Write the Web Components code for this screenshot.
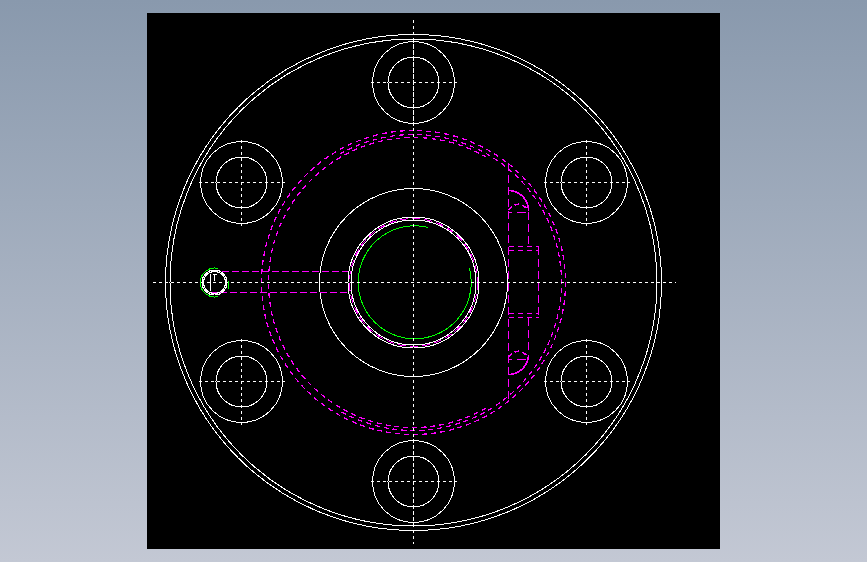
<!DOCTYPE html>
<html>
<head>
<meta charset="utf-8">
<title>Drawing</title>
<style>
  html, body { margin: 0; height: 100%; }
</style>
</head>
<body>
<cad-viewport>
  <cad-drawing></cad-drawing>
</cad-viewport>
<script>
const viewportTemplate = document.createElement('template');
viewportTemplate.innerHTML = `
  <style>
    :host {
      display: flex;
      box-sizing: border-box;
      width: 867px;
      height: 562px;
      padding: 13px 0 0 147px;
      background: linear-gradient(#8999ad, #c3c8d4);
      overflow: hidden;
    }
  </style>
  <slot></slot>
`;

class CadViewport extends HTMLElement {
  constructor() {
    super();
    this.root = this.attachShadow({ mode: 'open' });
    this.root.appendChild(viewportTemplate.content.cloneNode(true));
  }
}

const WHITE = '#fff';
const MAGENTA = '#f0f';
const GREEN = '#0f0';
const CX = 413.5;
const CY = 282.5;
const CENTER_DASH = '3 3';
const HIDDEN_DASH = '8 4';
const RING_DASH = '5 4';
const BOLT_HOLES = [
  [413.5, 82.5], [413.5, 481.5],
  [241.5, 182.5], [241.5, 381.5],
  [586.5, 182.5], [586.5, 381.5],
];

const attrs = (color, dash, width) =>
  `stroke="${color}"${width ? ` stroke-width="${width}"` : ''}${dash ? ` stroke-dasharray="${dash}"` : ''}`;
const circle = (x, y, r, color, dash, width) =>
  `<circle cx="${x}" cy="${y}" r="${r}" ${attrs(color, dash, width)}/>`;
const line = (x1, y1, x2, y2, color, dash, width) =>
  `<line x1="${x1}" y1="${y1}" x2="${x2}" y2="${y2}" ${attrs(color, dash, width)}/>`;
const path = (d, color, dash, width) =>
  `<path d="${d}" ${attrs(color, dash, width)}/>`;

function boltHole([x, y]) {
  return circle(x, y, 41, WHITE) + circle(x, y, 25.5, WHITE)
    + line(x - 43, y, x + 43, y, WHITE, CENTER_DASH)
    + line(x, y - 43, x, y + 43, WHITE, CENTER_DASH);
}

// angles in degrees, clockwise from the top of the circle
function arc(r, from, to, color, dash, width) {
  const at = (deg) => {
    const a = deg * Math.PI / 180;
    return `${CX + r * Math.sin(a)} ${CY - r * Math.cos(a)}`;
  };
  const large = to - from > 180 ? 1 : 0;
  return path(`M${at(from)}A${r} ${r} 0 ${large} 1 ${at(to)}`, color, dash, width);
}

function pocket() {
  const xa = 508.5, xb = 528.5, xc = 538.5;
  const w = 1.5;
  let out = line(xa, 163, xa, 403, MAGENTA, HIDDEN_DASH, w);
  out += line(xc, 247, xc, 317, MAGENTA, HIDDEN_DASH, w);
  // upper slot
  out += path(`M${xa} 190.5A20 20 0 0 1 ${xb} 210.5`, MAGENTA, '', w);
  out += path(`M${xa} 210.5Q518.5 198 ${xb} 210.5`, MAGENTA, '5 3', w);
  out += line(xa, 212.5, xb, 212.5, MAGENTA, '3 5 9 5', w);
  out += line(xb, 212, xb, 247, MAGENTA, HIDDEN_DASH, w);
  out += line(xa, 246.5, xc, 246.5, MAGENTA, RING_DASH, w);
  out += line(xa, 250.5, xc, 250.5, MAGENTA, RING_DASH, w);
  // lower slot
  out += line(xa, 313.5, xc, 313.5, MAGENTA, RING_DASH, w);
  out += line(xa, 317.5, xc, 317.5, MAGENTA, RING_DASH, w);
  out += line(xb, 318, xb, 354, MAGENTA, HIDDEN_DASH, w);
  out += path(`M${xa} 357.5Q518.5 345 ${xb} 357.5`, MAGENTA, '5 3', w);
  out += line(xa, 359.5, xb, 359.5, MAGENTA, '3 5 9 5', w);
  out += path(`M${xb} 354.5A20 20 0 0 1 ${xa} 374.5`, MAGENTA, '', w);
  return out;
}

function smallHole() {
  const x = 214.5;
  return line(222, 271.5, 350, 271.5, MAGENTA, '7 3')
    + line(210, 292.5, 350, 292.5, MAGENTA, '7 3', 1.5)
    + circle(x, CY, 12.5, WHITE) + circle(x, CY, 11, WHITE)
    + path(`M${x + 4} ${CY - 14}A14.5 14.5 0 1 0 ${x + 4} ${CY + 14}`, GREEN)
    + line(x + 14, CY - 2, x + 14, CY + 6, GREEN)
    + line(210.5, 274, 210.5, 291, WHITE)
    + line(x, 274, x, 281, WHITE)
    + line(x - 2, 274.5, x + 2, 274.5, WHITE);
}

function drawing() {
  let out = '';
  out += circle(CX, CY, 248, WHITE) + circle(CX, CY, 243.5, WHITE);
  out += circle(CX, CY, 94, WHITE);
  out += circle(CX, CY, 152, MAGENTA, RING_DASH, 1.25);
  out += arc(148, -30, 210, MAGENTA, RING_DASH, 1.25);
  out += arc(145, 150, 390, MAGENTA, RING_DASH, 1.25);
  out += BOLT_HOLES.map(boltHole).join('');
  out += pocket();
  out += smallHole();
  out += circle(CX, CY, 64, MAGENTA, HIDDEN_DASH);
  out += circle(CX, CY, 65.5, WHITE) + circle(CX, CY, 62.5, WHITE);
  out += path(`M${CX + 15} ${CY - 55}A56.5 56.5 0 1 0 ${CX + 56} ${CY - 14}`, GREEN);
  out += line(153, CY, 676, CY, WHITE, CENTER_DASH);
  out += line(CX, 20, CX, 544, WHITE, CENTER_DASH);
  return out;
}

class CadDrawing extends HTMLElement {
  constructor() {
    super();
    this.root = this.attachShadow({ mode: 'open' });
    this.root.innerHTML = `
      <style>
        :host { display: block; width: 573px; height: 536px; background: #000; }
        svg { display: block; }
        svg * { fill: none; shape-rendering: crispEdges; }
      </style>
      <svg width="573" height="536" viewBox="147 13 573 536">${drawing()}</svg>
    `;
  }
}

customElements.define('cad-viewport', CadViewport);
customElements.define('cad-drawing', CadDrawing);
</script>
</body>
</html>
